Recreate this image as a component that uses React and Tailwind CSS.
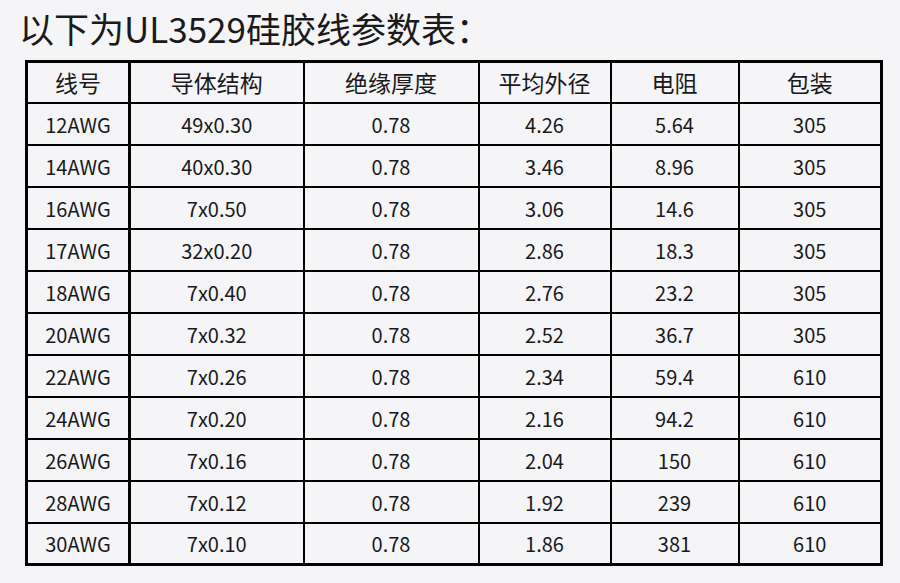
const headers = ['线号', '导体结构', '绝缘厚度', '平均外径', '电阻', '包装'];

const rows = [
  ['12AWG', '49x0.30', '0.78', '4.26', '5.64', '305'],
  ['14AWG', '40x0.30', '0.78', '3.46', '8.96', '305'],
  ['16AWG', '7x0.50', '0.78', '3.06', '14.6', '305'],
  ['17AWG', '32x0.20', '0.78', '2.86', '18.3', '305'],
  ['18AWG', '7x0.40', '0.78', '2.76', '23.2', '305'],
  ['20AWG', '7x0.32', '0.78', '2.52', '36.7', '305'],
  ['22AWG', '7x0.26', '0.78', '2.34', '59.4', '610'],
  ['24AWG', '7x0.20', '0.78', '2.16', '94.2', '610'],
  ['26AWG', '7x0.16', '0.78', '2.04', '150', '610'],
  ['28AWG', '7x0.12', '0.78', '1.92', '239', '610'],
  ['30AWG', '7x0.10', '0.78', '1.86', '381', '610'],
];

const widths = ['w-[103px]', 'w-[174px]', 'w-[175px]', 'w-[132px]', 'w-[128px]', 'w-[143px]'];

export default function App() {
  return (
    <div
      className="w-[900px] h-[583px] bg-[#f5f4f7] text-[#1a1a1a] overflow-hidden"
      style={{ fontFamily: '"Noto Sans CJK SC", "Noto Sans", sans-serif' }}
    >
      <h1 className="pl-[19px] h-[60px] flex items-center pb-[6px] text-[35px] leading-none font-normal">
        以下为UL3529硅胶线参数表：
      </h1>
      <table className="ml-[25px] w-[855px] table-fixed border-[3px] border-black">
        <thead>
          <tr>
            {headers.map((h, i) => (
              <th
                key={h}
                className={`${widths[i]} h-[41px] border-2 border-black ${i === 0 ? 'border-r-[3px]' : ''} text-center text-[23px] font-normal leading-none`}
              >
                {h}
              </th>
            ))}
          </tr>
        </thead>
        <tbody>
          {rows.map((r) => (
            <tr key={r[0]}>
              {r.map((c, i) => (
                <td
                  key={i}
                  className={`h-[42px] border-2 border-black ${i === 0 ? 'border-r-[3px]' : ''} text-center text-[20px] leading-none pt-[2px]`}
                >
                  {c}
                </td>
              ))}
            </tr>
          ))}
        </tbody>
      </table>
    </div>
  );
}
